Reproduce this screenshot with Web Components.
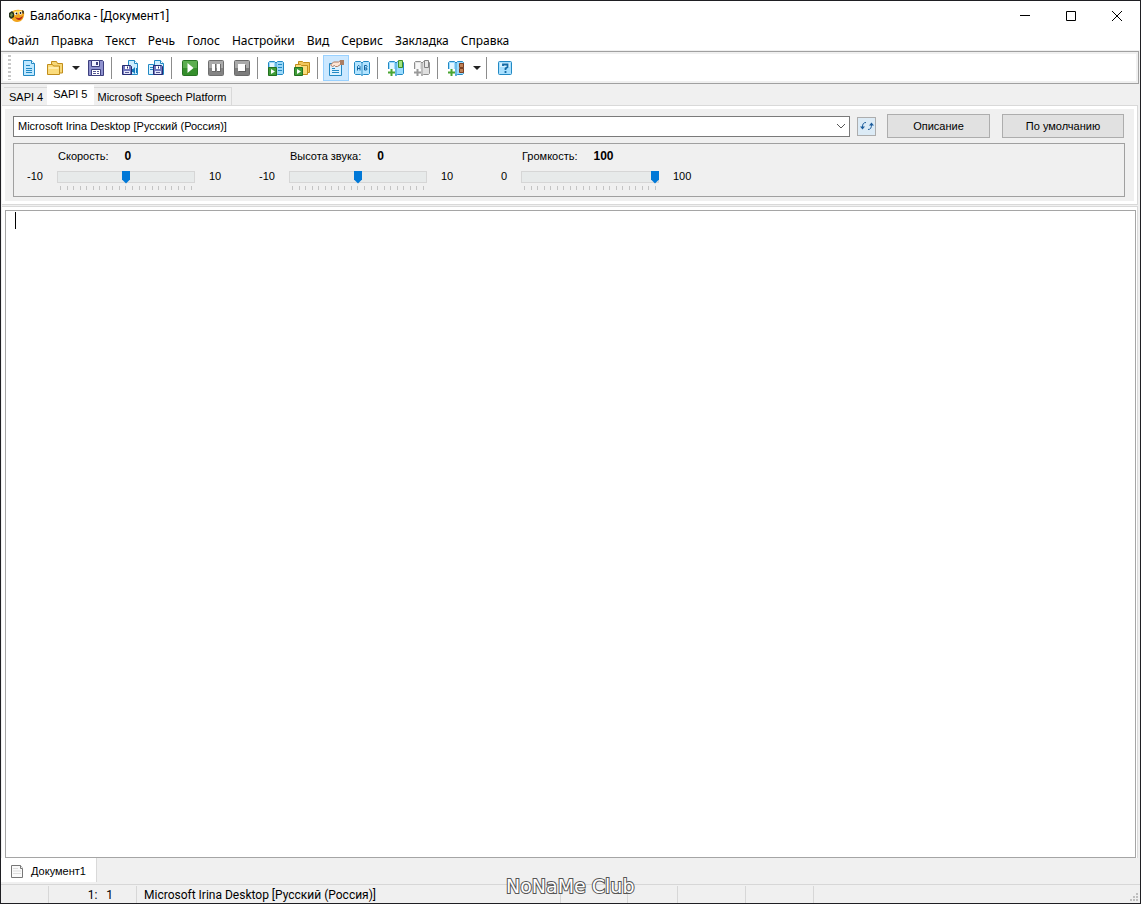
<!DOCTYPE html>
<html lang="ru">
<head>
<meta charset="utf-8">
<title>Балаболка - [Документ1]</title>
<style>
  html, body { height: 100%; margin: 0; }
  body { font: 12px/16px "Noto Sans", "Open Sans", sans-serif; color: #000; background: #f0f0f0; }
</style>
</head>
<body>
<app-window></app-window>

<script>
const define = (name, html, setup) => {
  const tpl = document.createElement('template');
  tpl.innerHTML = '<style>*{box-sizing:border-box}:host{box-sizing:border-box}</style>' + html;
  customElements.define(name, class extends HTMLElement {
    constructor() {
      super();
      this.attachShadow({ mode: 'open' }).append(tpl.content.cloneNode(true));
    }
    connectedCallback() {
      if (setup && !this.ready) { this.ready = true; setup(this, this.shadowRoot); }
    }
  });
};

const book = (stroke, fill, light) => `
  <path d="M.5 2.500l1-1h5l1.500 1.500 1.500-1.500h5l1 1v11l-1 1h-5l-1.500 1-1.500-1h-5l-1-1z" fill="${fill}" stroke="${stroke}"/>
  <path d="M2 3h4v10H2z" fill="${light}"/><path d="M8 3v12" stroke="${stroke}" opacity=".8"/>`;
const plus = (color) => `<path d="M0 9h7v7H0z" fill="#fff"/><path d="M3.500 9v7M0 12.500h7" stroke="${color}" stroke-width="2"/>`;
const floppy = (x, y) => `<g transform="translate(${x} ${y})"><path d="M.5.5h8l1 1v8h-9z" fill="#7277bd" stroke="#252b72"/><path d="M3 1h4v3H3z" fill="#fff"/><path d="M5.500 1.500v2" stroke="#252b72"/><path d="M2 6h6v3H2z" fill="#e4e6fa"/><path d="M3 7.500h4" stroke="#565996"/></g>`;
const page = (x) => `<path d="M${x} .5h6l3 3v11h-9z" fill="#cdeeff" stroke="#2289c4"/><path d="M${x + 6} .5v3h3" fill="#fff" stroke="#2289c4"/>`;
const play = `<path d="M.5 7.500h8v8h-8z" fill="#3f9c38" stroke="#23701f"/><path d="M3 9l4 2.500L3 14z" fill="#fff"/>`;
const media = (c1, c2, edge, inner) => `<rect x=".5" y=".5" width="15" height="15" rx="1" fill="${c1}" stroke="${edge}"/><path d="M1 8h14v7H1z" fill="${c2}"/>${inner}`;

const ICONS = {
  logo: `<path d="M2 5c2-4 11-4 13-1 1 5-2 10-7 10S2 10 2 5z" fill="#f2a41c"/><path d="M4 4c2-2 8-2 10 0-3 2-7 2-10 0z" fill="#ffdf55"/><path d="M0 5l3-2 2 2v4l-3 2-2-2z" fill="#27351d"/><path d="M2 5l2 1-1 3-2-1z" fill="#7b9a55"/><path d="M13 2l2 1v3l-2-1z" fill="#5b471c"/><circle cx="7" cy="5.500" r="1.700" fill="#fff"/><circle cx="11.500" cy="5" r="1.700" fill="#fff"/><circle cx="7.500" cy="5.500" r=".9" fill="#111"/><circle cx="11.500" cy="5" r=".9" fill="#111"/><path d="M6 9c3 2 5 1 8-1-1 4-5 6-8 1z" fill="#b5271b"/>`,
  doc: `<path d="M2.500.5h8l3 3v12h-11z" fill="#bfe8ff" stroke="#2289c4"/><path d="M10.500.5v3h3" fill="#fff" stroke="#2289c4"/><path d="M5 5.500h4M5 8.500h6M5 10.500h6M5 12.500h6" stroke="#2289c4"/>`,
  open: `<path d="M4.500 4V1.500h5l1 2h5v9.500h-3" fill="#f7d878" stroke="#c18d1b"/><path d="M.5 4.500h5l1 1.500h6v8.500H.5z" fill="#fbdc7c" stroke="#c18d1b"/><path d="M1.500 7h10v2h-10z" fill="#ffedb0"/>`,
  save: `<path d="M.5.5h14l1 1v14H.5z" fill="#8f92cf" stroke="#3d3f7e"/><path d="M3.500.5h8v6h-8z" fill="#f2f3ff" stroke="#3d3f7e"/><path d="M9 2v3" stroke="#3d3f7e" stroke-width="2"/><path d="M3.500 9.500h9v6h-9z" fill="#fff" stroke="#3d3f7e"/><path d="M5 11.500h3M9 11.500h2M5 13.500h3M9 13.500h2" stroke="#565996"/>`,
  saveAudio: `${page(6.500)}${floppy(0, 5)}<path d="M10 9h1l2-2v7l-2-2h-1z" fill="#1479bd"/><path d="M14.500 8v5" stroke="#1479bd"/>`,
  saveMulti: `<path d="M.5 4.500h5v10h-5z" fill="#d9f2ff" stroke="#2289c4"/>${page(6.500)}<path d="M2 7.500h3M2 9.500h3" stroke="#2289c4"/>${floppy(5, 5)}`,
  play: media('#5cae50', '#358f2c', '#277323', '<path d="M5.500 3l6 5-6 5z" fill="#fff"/>'),
  pause: media('#aaa', '#848484', '#6f6f6f', '<path d="M4 4h4v8H4zM9 4h4v8H9z" fill="#6a6a6a"/><path d="M4 4h3v7H4zM9 4h3v7H9z" fill="#fff"/>'),
  stop: media('#aaa', '#7d7d7d', '#6a6a6a', '<path d="M5 5h7v7H5z" fill="#5e5e5e"/><path d="M4 4h7v7H4z" fill="#fff"/>'),
  bookPlay: `${book('#2289c4', '#9bd8f8', '#e2f6ff')}<path d="M10 4.500h4M10 7.500h4M10 10.500h4" stroke="#2289c4"/>${play}`,
  folderPlay: `<path d="M4.500 4.500v-3h4l1 1h6v10h-11z" fill="#f2c65b" stroke="#c18d1b"/><path d="M1.500 4.500h5l1 1h6v9h-12z" fill="#fbdc7c" stroke="#c18d1b"/>${play}`,
  props: `<path d="M1.500 3.500h12v12h-12z" fill="#dbf1ff" stroke="#2289c4"/><path d="M4 8.500h3M4 10.500h7M4 12.500h7" stroke="#2289c4"/><path d="M2.500 5l3-3h5l2-1.500v4l-3 2h-2l-1-1-2 1z" fill="#ffe6d5" stroke="#ad7a62"/><path d="M12 0h4v5h-4z" fill="#ab7d62"/>`,
  dict: `${book('#2289c4', '#b3e4ff', '#b3e4ff')}<path d="M3.500 10.500v-4l1-1h.5l1 1v4M3.500 8.500h2.500M10.500 5.500v4.500h2l.5-1-.5-1h-2M10.500 5.500h2l.5 1-.5 1" fill="none" stroke="#10639f"/>`,
  bookAdd: `${book('#2289c4', '#9bdcff', '#e2f6ff')}<path d="M10.500.5h4v7h-4z" fill="#a2e37f" stroke="#3c8f28"/>${plus('#4aa532')}`,
  bookDel: `${book('#8e8e8e', '#e0e0e0', '#f7f7f7')}<path d="M10.500.5h4v7h-4z" fill="#e8e8e8" stroke="#828282"/>${plus('#999')}`,
  bookMarks: `${book('#2289c4', '#9bdcff', '#e2f6ff')}<path d="M11.500 3.500h4v4h-4zM11.500 8.500h4v4h-4z" fill="#bd8157" stroke="#7e4020"/>${plus('#4aa532')}`,
  help: `<rect x="1.500" y="1.500" width="13" height="13" rx="1" fill="#a8e0ff" stroke="#2289c4"/><path d="M3 3h10v4H3z" fill="#d4f1ff"/><path d="M6 6V4.500h4.500V7L8.500 8.500V10M8.500 11v2" fill="none" stroke="#146ba5" stroke-width="1.800"/>`,
  refresh: `<path d="M7 4.500C4.500 4.500 3.500 6 3.500 9M9 11.500c2.500 0 3.500-1.500 3.500-5" fill="none" stroke="#1d5d9c"/><path d="M1 8.500h5l-2.500 3zM10 7.500h5l-2.500-3z" fill="#1d5d9c"/>`,
  blank: `<path d="M1.500 2.500h9l2 3v9h-11z" fill="#fafafa" stroke="#777"/><path d="M10.500 2.500v3h2" fill="#fff" stroke="#777"/><path d="M3 5.500h5M3 8h8M3 10.500h8" stroke="#ddd"/>`,
  min: `<path d="M3 7.500h10" stroke="#000"/>`,
  max: `<path d="M3.500 3.500h9v9h-9z" fill="none" stroke="#000"/>`,
  close: `<path d="M3 3l10 10M13 3L3 13" stroke="#000"/>`
};

define('ui-icon', `<style>:host{display:block;width:16px;height:16px}svg{display:block}</style><svg width="16" height="16" viewBox="0 0 16 16" aria-hidden="true"></svg>`,
  (el, root) => { root.querySelector('svg').innerHTML = ICONS[el.getAttribute('name')]; });

define('title-bar', `
<style>
  :host { display: flex; align-items: center; height: 29px; padding-left: 8px; background: #fff; }
  h1 { flex: 1; margin: 0 0 0 5px; font: 12px/16px Roboto, "Noto Sans", sans-serif; }
  .app { width: 16px; }
  button { width: 46px; height: 28px; display: grid; place-items: center; padding: 0; border: 0; background: none; }
</style>
<ui-icon class="app" name="logo"></ui-icon>
<h1><slot></slot></h1>
<button aria-label="Свернуть"><ui-icon name="min"></ui-icon></button>
<button aria-label="Развернуть"><ui-icon name="max"></ui-icon></button>
<button aria-label="Закрыть"><ui-icon name="close"></ui-icon></button>`);

define('menu-bar', `
<style>
  :host { display: block; background: #fff; }
  nav { display: flex; height: 20px; padding: 2px 0 0 7px; gap: 12px; }
  button { border: 0; padding: 0; background: none; font: inherit; color: inherit; }
</style>
<nav></nav>`, (el, root) => {
  root.querySelector('nav').innerHTML = el.getAttribute('items').split(',').map(t => `<button>${t}</button>`).join('');
});

define('tool-button', `
<style>
  :host { display: block; }
  button { width: 26px; height: 26px; display: grid; place-items: center; padding: 0; border: 1px solid transparent; background: none; }
  :host([active]) button { background: #cce8ff; border-color: #99d1ff; }
  :host([arrow]) button { width: 15px; }
  i { border: 4px solid transparent; border-top-color: #222; border-bottom: 0; }
</style>
<button></button>`, (el, root) => {
  const b = root.querySelector('button');
  b.setAttribute('aria-label', el.getAttribute('label'));
  b.innerHTML = el.hasAttribute('arrow') ? '<i></i>' : `<ui-icon name="${el.getAttribute('icon')}"></ui-icon>`;
});

define('tool-bar', `
<style>
  :host { display: block; padding-top: 1px; background: #f0f0f0; }
  .frame { display: flex; align-items: center; height: 33px; margin-right: 1px; border: solid #a0a0a0; border-width: 1px 1px 1px 0; background: #fff; box-shadow: inset 0 0 0 2px #f0f0f0; }
  .grip { width: 3px; height: 25px; margin: 0 5px 0 7px; background: repeating-linear-gradient(#c8c8c8 0 2px, #fff 2px 4px); }
  hr { width: 1px; height: 22px; margin: 0 5px 0 2px; border: 0; background: #8c8c8c; }
</style>
<div class="frame" role="toolbar">
  <span class="grip"></span>
  <tool-button icon="doc" label="Создать"></tool-button>
  <tool-button icon="open" label="Открыть"></tool-button>
  <tool-button arrow label="Недавние файлы"></tool-button>
  <tool-button icon="save" label="Сохранить"></tool-button>
  <hr>
  <tool-button icon="saveAudio" label="Сохранить аудиофайл"></tool-button>
  <tool-button icon="saveMulti" label="Разделить и сохранить"></tool-button>
  <hr>
  <tool-button icon="play" label="Прочитать вслух"></tool-button>
  <tool-button icon="pause" label="Пауза"></tool-button>
  <tool-button icon="stop" label="Стоп"></tool-button>
  <hr>
  <tool-button icon="bookPlay" label="Прочитать выделенный текст"></tool-button>
  <tool-button icon="folderPlay" label="Прочитать текст из буфера"></tool-button>
  <hr>
  <tool-button icon="props" active label="Панель свойств"></tool-button>
  <tool-button icon="dict" label="Панель словарей"></tool-button>
  <hr>
  <tool-button icon="bookAdd" label="Добавить закладку"></tool-button>
  <tool-button icon="bookDel" label="Перейти к закладке"></tool-button>
  <hr>
  <tool-button icon="bookMarks" label="Именованные закладки"></tool-button>
  <tool-button arrow label="Список закладок"></tool-button>
  <hr>
  <tool-button icon="help" label="Справка"></tool-button>
</div>`);

define('engine-tabs', `
<style>
  :host { display: block; font: 11px/16px "Liberation Sans", Arial, sans-serif; }
  div { display: flex; align-items: flex-end; height: 21px; padding-left: 3px; }
  button { height: 18px; padding: 0 4px; border: 1px solid #d9d9d9; border-width: 1px 1px 0 0; background: #f0f0f0; font: inherit; color: inherit; white-space: nowrap; }
  button:first-child { padding: 0 4px 0 5px; border-right: 0; }
  button[aria-selected=true] { height: 20px; padding: 0 6px 2px; background: #fff; border: 0; }
</style>
<div role="tablist">
  <button role="tab">SAPI 4</button>
  <button role="tab" aria-selected="true">SAPI 5</button>
  <button role="tab">Microsoft Speech Platform</button>
</div>`);

define('voice-slider', `
<style>
  :host { display: grid; grid-template: 16px 22px / 29px 138px 51px; gap: 4px 14px; width: 232px; }
  .head { grid-column: 2 / 4; display: flex; gap: 16px; padding-left: 1px; white-space: nowrap; }
  output { font-size: 12px; font-weight: bold; }
  .min { text-align: right; }
  .track { display: flex; flex-direction: column; gap: 3px; padding-top: 3px; }
  input { appearance: none; -webkit-appearance: none; display: block; width: 138px; height: 12px; margin: 0; background: #e7eaea; border: 0; box-shadow: inset 0 0 0 1px #d6d6d6; }
  input::-webkit-slider-thumb { -webkit-appearance: none; width: 8px; height: 13px; border: 0; background: #0078d7; clip-path: polygon(0 0, 100% 0, 100% 70%, 50% 100%, 0 70%); }
  .ticks { display: flex; justify-content: space-between; height: 4px; margin: 0 3px; }
  .ticks i { width: 1px; background: #c4c4c4; }
</style>
<div class="head"><label for="r"></label><output for="r"></output></div>
<span class="min"></span>
<div class="track"><input id="r" type="range"><div class="ticks"></div></div>
<span class="max"></span>`, (el, root) => {
  const $ = s => root.querySelector(s), a = n => el.getAttribute(n);
  $('label').textContent = a('label');
  $('output').textContent = a('value');
  $('.min').textContent = a('min');
  $('.max').textContent = a('max');
  Object.assign($('input'), { min: a('min'), max: a('max') });
  $('input').value = a('value');
  $('input').addEventListener('input', e => { $('output').textContent = e.target.value; });
  $('.ticks').innerHTML = '<i></i>'.repeat(21);
});

define('voice-panel', `
<style>
  :host { display: block; height: 100px; margin: 0 2px 0 1px; padding: 3px; background: #fff; border: 1px solid #d9d9d9; border-left: 0; font: 11px/16px "Liberation Sans", Arial, sans-serif; }
  .body { height: 100%; padding: 5px 8px 0; background: #f0f0f0; }
  .row { display: grid; grid-template-columns: 1fr 19px 114px 134px; align-items: center; height: 24px; margin-right: 2px; }
  .combo { position: relative; margin-right: 7px; }
  select { appearance: none; display: block; width: 100%; height: 21px; padding: 0 4px; border: 1px solid #7a7a7a; border-radius: 0; background: #fff; font: inherit; color: inherit; }
  .combo svg { position: absolute; right: 4px; top: 7px; pointer-events: none; }
  .row button { height: 24px; padding: 0; border: 1px solid #adadad; background: #e1e1e1; font: inherit; color: inherit; }
  .row .refresh { height: 19px; display: grid; place-items: center; background: #dcebf6; }
  .row .desc { margin-left: 11px; }
  .row .def { margin-left: 12px; }
  .sliders { display: flex; height: 54px; margin: 5px 1px 0 0; padding-top: 4px; border: 1px solid #a0a0a0; }
</style>
<div class="body">
  <div class="row">
    <div class="combo">
      <select aria-label="Голос"><option>Microsoft Irina Desktop [Русский (Россия)]</option></select>
      <svg width="10" height="7" viewBox="0 0 10 7"><path d="M1 1l4 4 4-4" fill="none" stroke="#555"/></svg>
    </div>
    <button class="refresh" aria-label="Обновить"><ui-icon name="refresh"></ui-icon></button>
    <button class="desc">Описание</button>
    <button class="def">По умолчанию</button>
  </div>
  <div class="sliders">
    <voice-slider label="Скорость:" min="-10" max="10" value="0"></voice-slider>
    <voice-slider label="Высота звука:" min="-10" max="10" value="0"></voice-slider>
    <voice-slider label="Громкость:" min="0" max="100" value="100"></voice-slider>
  </div>
</div>`);

define('text-editor', `
<style>
  :host { display: flex; flex: 1; position: relative; margin: 1px 2px 0 1px; padding: 3px 1px 0 3px; background: #fff; border-top: 1px solid #d9d9d9; border-right: 1px solid #d9d9d9; }
  textarea { flex: 1; width: 100%; resize: none; padding: 1px 9px; border: 1px solid #a5a5a5; border-radius: 0; outline: 0; background: #fff; font: 14px/18px "Liberation Sans", Arial, sans-serif; }
  .caret { position: absolute; left: 13px; top: 5px; width: 1px; height: 17px; background: #000; }
</style>
<textarea aria-label="Текст документа"></textarea><span class="caret"></span>`);

define('document-tabs', `
<style>
  :host { display: flex; height: 26px; padding-bottom: 2px; font: 11px/16px "Liberation Sans", Arial, sans-serif; }
  button { display: flex; align-items: center; gap: 5px; padding: 2px 10px 0 9px; border: 0; border-right: 1px solid #d9d9d9; background: #fff; font: inherit; color: inherit; }
</style>
<button role="tab" aria-selected="true"><ui-icon name="blank"></ui-icon><slot></slot></button>`);

define('status-bar', `
<style>
  :host { display: flex; position: relative; height: 19px; padding-top: 1px; border-top: 1px solid #d7d7d7; font-family: Roboto, "Noto Sans", sans-serif; }
  span { flex: none; padding-left: 7px; border-left: 1px solid #d7d7d7; line-height: 18px; white-space: nowrap; }
  .mode { width: 47px; border: 0; }
  .pos { width: 88px; padding: 0 23px 0 0; text-align: right; white-space: pre; }
  .voice { width: 424px; }
  .a { width: 67px; }
  .b { width: 50px; }
  .c { width: 68px; }
  svg { position: absolute; right: 0; bottom: 0; }
</style>
<span class="mode"></span><span class="pos">1:   1</span><span class="voice"><slot></slot></span><span class="a"></span><span class="b"></span><span class="c"></span><span class="c"></span><span></span>
<svg width="12" height="12" viewBox="0 0 12 12"><path d="M8 2h2v2H8zM8 5h2v2H8zM8 8h2v2H8zM5 5h2v2H5zM5 8h2v2H5zM2 8h2v2H2z" fill="#bfbfbf"/></svg>`);

define('club-mark', `
<style>
  :host { position: absolute; left: 505px; bottom: 5px; font: 19px/24px "DejaVu Sans", sans-serif; color: #fff; -webkit-text-stroke: 2px #555; paint-order: stroke fill; pointer-events: none; white-space: nowrap; }
</style>
<slot></slot>`);

define('app-window', `
<style>
  :host { display: flex; flex-direction: column; position: relative; min-height: 100vh; border: 1px solid #1f1f23; background: #f0f0f0; }
</style>
<title-bar>Балаболка - [Документ1]</title-bar>
<menu-bar items="Файл,Правка,Текст,Речь,Голос,Настройки,Вид,Сервис,Закладка,Справка"></menu-bar>
<tool-bar></tool-bar>
<engine-tabs></engine-tabs>
<voice-panel></voice-panel>
<text-editor></text-editor>
<document-tabs>Документ1</document-tabs>
<status-bar>Microsoft Irina Desktop [Русский (Россия)]</status-bar>
<club-mark>NoNaMe Club</club-mark>`);
</script>
</body>
</html>
